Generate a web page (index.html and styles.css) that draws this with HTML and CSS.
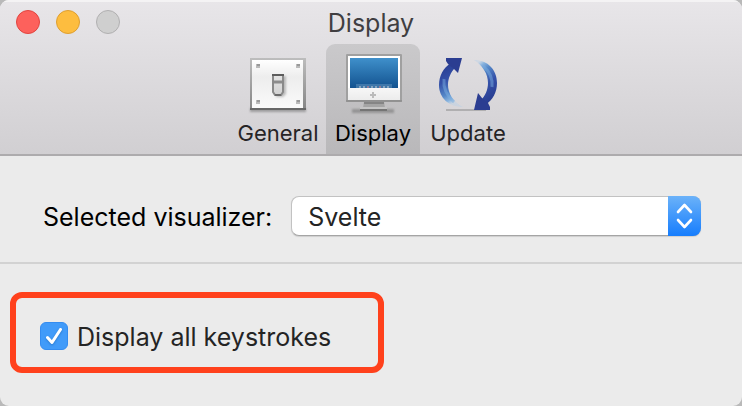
FILE: index.html
```html
<!DOCTYPE html>
<html lang="en">
<head>
<meta charset="utf-8">
<title>Display</title>
<link rel="stylesheet" href="styles.css">
</head>
<body>
<main class="window">
  <header class="header">
    <div class="titlebar">
      <div class="lights">
        <button class="light close" aria-label="Close"></button>
        <button class="light minimize" aria-label="Minimize"></button>
        <button class="light zoom" aria-label="Zoom" disabled></button>
      </div>
      <h1 class="title">Display</h1>
    </div>
    <nav class="toolbar">
      <button class="tab">
        <svg class="icon" width="64" height="60" viewBox="0 0 64 60" aria-hidden="true">
          <defs>
            <linearGradient id="plate" x2="0" y2="1"><stop stop-color="#fff"/><stop offset=".35" stop-color="#ededed"/><stop offset="1" stop-color="#fafafa"/></linearGradient>
            <linearGradient id="rim" x2="0" y2="1"><stop stop-color="#bdbdbd"/><stop offset="1" stop-color="#858585"/></linearGradient>
            <linearGradient id="lever" x2="0" y2="1"><stop stop-color="#e4e4e4"/><stop offset="1" stop-color="#d2d2d2"/></linearGradient>
            <filter id="soft" x="-50%" y="-50%" width="200%" height="200%"><feGaussianBlur stdDeviation="1.3"/></filter>
          </defs>
          <rect x="4" y="52" width="56" height="4" fill="#777" filter="url(#soft)" opacity=".6"/>
          <rect x="4" y="2" width="56" height="52" fill="url(#rim)"/>
          <rect x="6" y="4" width="51" height="48" fill="url(#plate)"/>
          <path d="M4 53h56" stroke="#686868" stroke-width="2"/>
          <path fill="#bbb" d="M10 8h4v4h-4zM50 8h4v4h-4zM10 44h4v4h-4zM50 44h4v4h-4z"/>
          <path fill="#999" d="M11 8h3v2h-3zM51 8h3v2h-3zM11 44h3v2h-3zM51 44h3v2h-3z"/>
          <path d="M30 20h10v18l-3 3h-7z" fill="#777" opacity=".45" filter="url(#soft)"/>
          <path d="M27 19h10v17l-2 3h-6l-2-3z" fill="url(#lever)" stroke="#8a8a8a" stroke-width="2"/>
          <path d="M26 19h12" stroke="#5c5c5c" stroke-width="2"/>
          <path d="M28 26h8" stroke="#8c8c8c" stroke-width="3"/>
          <path d="M29 39h6" stroke="#6c6c6c" stroke-width="2"/>
        </svg>
        <span>General</span>
      </button>
      <button class="tab selected" aria-current="page">
        <svg class="icon" width="64" height="60" viewBox="0 0 64 60" aria-hidden="true">
          <defs>
            <linearGradient id="screen" x2="0" y2="1"><stop stop-color="#3f90cb"/><stop offset="1" stop-color="#135390"/></linearGradient>
            <linearGradient id="chin" x2="0" y2="1"><stop stop-color="#f7f7f7"/><stop offset="1" stop-color="#ececec"/></linearGradient>
          </defs>
          <rect x="11" y="53" width="42" height="4" fill="#777" filter="url(#soft)" opacity=".6"/>
          <path d="M23 46h20l1 6H22z" fill="#a4a4a4"/>
          <path d="M23 47h20" stroke="#858585" stroke-width="2"/>
          <path d="M19 51h27v2H19z" fill="#c4c4c4"/>
          <path d="M19 53h27v2H19z" fill="#747474"/>
          <rect x="5" y="-2" width="56" height="48" rx="1" fill="#a0a0a0"/>
          <rect x="7" y="0" width="52" height="44" fill="#fff"/>
          <rect x="9" y="2" width="48" height="30" fill="url(#screen)"/>
          <path d="M7 32h52v12H7z" fill="url(#chin)"/>
          <path d="M15 28h36v4H15z" fill="#6f9dc3" opacity=".45"/>
          <path d="M18 31h30" stroke="#b3c4d3" stroke-width="2" stroke-dasharray="2 2" opacity=".6"/>
          <path d="M26 31h2M38 31h2" stroke="#9a6b86" stroke-width="2" opacity=".7"/>
          <path d="M32 36v6M29 39h6" stroke="#bbb" stroke-width="2"/>
          <path d="M5 45h56" stroke="#838383"/>
        </svg>
        <span>Display</span>
      </button>
      <button class="tab">
        <svg class="icon" width="64" height="60" viewBox="0 0 64 60" aria-hidden="true">
          <defs>
            <linearGradient id="left" x1="0" y1="0" x2=".3" y2="1"><stop stop-color="#26398c"/><stop offset=".45" stop-color="#3450a8"/><stop offset=".75" stop-color="#5588c8"/><stop offset=".9" stop-color="#8bb5df"/><stop offset="1" stop-color="#b4cfe8" stop-opacity=".4"/></linearGradient>
            <linearGradient id="right" x1=".7" y1="1" x2=".3" y2="0"><stop stop-color="#26398c"/><stop offset=".45" stop-color="#3450a8"/><stop offset=".75" stop-color="#5588c8"/><stop offset=".9" stop-color="#8bb5df"/><stop offset="1" stop-color="#b4cfe8" stop-opacity=".4"/></linearGradient>
          </defs>
          <path d="M10 54h40" stroke="#777" stroke-width="2" opacity=".4"/>
          <path d="M15 7C7 12 3 20 3 29 3 42 13 51 27 51 17 46 12 37 12 29 12 22 15 16 19 12z" fill="url(#left)"/>
          <path d="M49 49C57 44 61 36 61 27 61 14 52 4 38 4 47 10 52 18 52 27 52 34 49 40 45 44z" fill="url(#right)"/>
          <path d="M10 2h16l-4 15-4-4-6-5-2-3zM54 54H38l4-17 4 5 6 5 2 4z" fill="#2b3d91"/>
          <path d="M8 23c-1 9 3 17 10 23M56 31c1-9-3-16-9-21" fill="none" stroke="#79aee0" stroke-width="3" opacity=".5"/>
        </svg>
        <span>Update</span>
      </button>
    </nav>
  </header>
  <section class="row visualizer">
    <label for="visualizer">Selected visualizer:</label>
    <div class="popup">
      <select id="visualizer"><option>Svelte</option></select>
      <svg class="arrows" width="33" height="40" viewBox="0 0 33 40" aria-hidden="true"><path d="M10 16l6.500-7 6.500 7M10 24l6.500 7 6.500-7" fill="none" stroke="#fff" stroke-width="2.600" stroke-linecap="round" stroke-linejoin="round"/></svg>
    </div>
  </section>
  <section class="options">
    <div class="highlight">
      <label class="check">
        <span class="box">
          <input type="checkbox" checked>
          <svg class="tick" width="28" height="28" viewBox="0 0 28 28" aria-hidden="true"><path d="M7.500 15.500l4.500 5L20.500 7.500" fill="none" stroke="#fff" stroke-width="3" stroke-linecap="round" stroke-linejoin="round"/></svg>
        </span>
        <span>Display all keystrokes</span>
      </label>
    </div>
  </section>
</main>
</body>
</html>
```
FILE: styles.css
```css
* { box-sizing: border-box; }
body {
  margin: 0;
  background: #b9b9b9;
  font-family: Inter, "Liberation Sans", sans-serif;
  font-size: 25px;
  line-height: 32px;
  color: #000;
}
button, select, input { font: inherit; margin: 0; padding: 0; }
.window {
  min-height: 100vh;
  background: #ebebeb;
  border-radius: 9px;
  overflow: hidden;
}
.header {
  background: linear-gradient(#e8e6e9, #d1cfd2);
  border-bottom: 2px solid #adabad;
  box-shadow: inset 0 2px #f4f3f4;
}
.titlebar {
  display: grid;
  grid-template-columns: 1fr auto 1fr;
  align-items: center;
  height: 44px;
  padding: 0 16px;
}
.lights { display: flex; gap: 16px; }
.light { width: 24px; height: 24px; border: 1px solid; border-radius: 50%; }
.close { background: #fd615c; border-color: #e2443f; }
.minimize { background: #fdbd3f; border-color: #df9f30; }
.zoom { background: #cfcfcf; border-color: #b1b0b1; }
.title { margin: 0; padding-top: 2px; font-size: 25px; font-weight: 400; color: #403e41; }
.toolbar { display: flex; justify-content: center; gap: 1px; padding-left: 4px; }
.tab {
  display: flex;
  flex-direction: column;
  align-items: center;
  width: 94px;
  height: 110px;
  padding: 12px 0 0;
  border: 0;
  background: none;
  color: #262426;
  font-size: 22px;
  line-height: 34px;
}
.selected {
  background: linear-gradient(#cac9cb, #b9b8ba);
  border-radius: 9px 9px 0 0;
  color: #000;
}
.icon { display: block; overflow: visible; }
.row {
  display: flex;
  align-items: center;
  gap: 19px;
  padding: 40px 41px 26px 43px;
  border-bottom: 2px solid #d2d2d2;
}
.row label { padding-top: 2px; }
.popup { position: relative; flex: 1; height: 40px; }
.popup select {
  appearance: none;
  width: 100%;
  height: 40px;
  padding: 2px 44px 0 16px;
  border: 1px solid #c2c2c2;
  border-bottom-color: #a5a5a5;
  border-radius: 8px;
  background: #fff;
  box-shadow: 0 1px 1px #cfcfcf;
  color: #242424;
}
.arrows {
  position: absolute;
  top: 0;
  right: 0;
  border-radius: 0 8px 8px 0;
  background: linear-gradient(#6bb2f9, #167dfd);
  pointer-events: none;
}
.options { padding: 28px 10px; }
.highlight {
  width: fit-content;
  padding: 22px 47px 15px 24px;
  border: 6px solid #ff411c;
  border-radius: 12px;
}
.check { display: flex; align-items: center; gap: 9px; height: 32px; color: #242424; }
.check > span:last-child { padding-top: 2px; }
.box { position: relative; width: 28px; height: 28px; }
.box input {
  appearance: none;
  display: block;
  width: 28px;
  height: 28px;
  border: 1px solid #348cf0;
  border-radius: 6px;
  background: #419bf9;
}
.tick { position: absolute; inset: 0; pointer-events: none; filter: drop-shadow(0 1px 1px #2778cc); }
```
